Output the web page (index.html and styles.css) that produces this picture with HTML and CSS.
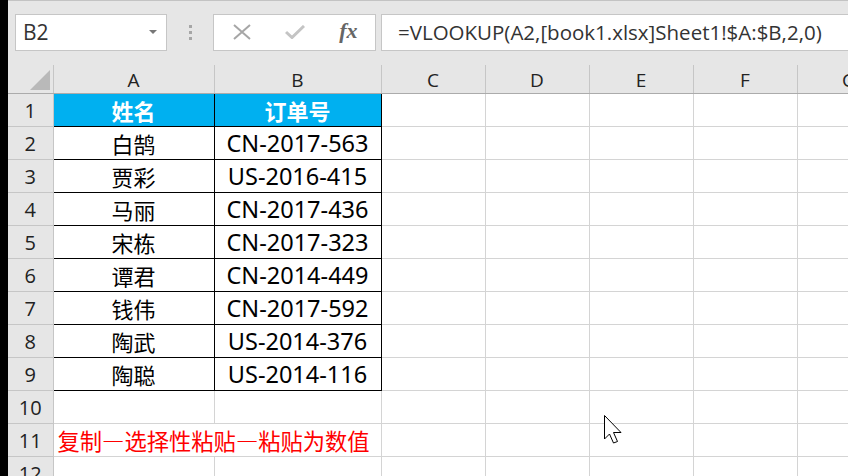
FILE: index.html
```html
<!DOCTYPE html>
<html lang="zh-CN">
<head>
    <meta charset="UTF-8">
    <meta name="viewport" content="width=device-width, initial-scale=1.0">
    <link rel="stylesheet" href="styles.css">
</head>
<body>
    <div class="strip"></div>
    <div class="app">
        <!-- barra de fórmulas -->
        <div class="toolbar">
            <div class="namebox">
                <span>B2</span>
                <span class="caret"></span>
            </div>
            <div class="grip"><i></i><i></i><i></i></div>
            <div class="buttons">
                <span class="btn">
                    <svg width="18" height="16" viewBox="0 0 18 16"><path d="M1 1 L17 15 M17 1 L1 15" stroke="#a6a6a6" stroke-width="2" fill="none"/></svg>
                </span>
                <span class="btn">
                    <svg width="20" height="14" viewBox="0 0 20 14"><path d="M1 7 L7 12.5 L19 1" stroke="#c4c4c4" stroke-width="3" fill="none"/></svg>
                </span>
                <span class="btn fx">fx</span>
            </div>
            <div class="formula">=VLOOKUP(A2,[book1.xlsx]Sheet1!$A:$B,2,0)</div>
        </div>

        <!-- planilha -->
        <table class="sheet">
            <colgroup>
                <col class="c-row">
                <col class="c-a">
                <col class="c-b">
                <col class="c-n">
                <col class="c-n">
                <col class="c-n">
                <col class="c-n">
                <col class="c-n">
            </colgroup>
            <tr class="colhead">
                <th class="corner"><span class="tri"></span></th>
                <th>A</th><th>B</th><th>C</th><th>D</th><th>E</th><th>F</th><th>G</th>
            </tr>
            <tr>
                <th>1</th>
                <td class="hd box">姓名</td><td class="hd box">订单号</td>
                <td></td><td></td><td></td><td></td><td></td>
            </tr>
            <tr>
                <th>2</th>
                <td class="box">白鹄</td><td class="box num">CN-2017-563</td>
                <td></td><td></td><td></td><td></td><td></td>
            </tr>
            <tr>
                <th>3</th>
                <td class="box">贾彩</td><td class="box num">US-2016-415</td>
                <td></td><td></td><td></td><td></td><td></td>
            </tr>
            <tr>
                <th>4</th>
                <td class="box">马丽</td><td class="box num">CN-2017-436</td>
                <td></td><td></td><td></td><td></td><td></td>
            </tr>
            <tr>
                <th>5</th>
                <td class="box">宋栋</td><td class="box num">CN-2017-323</td>
                <td></td><td></td><td></td><td></td><td></td>
            </tr>
            <tr>
                <th>6</th>
                <td class="box">谭君</td><td class="box num">CN-2014-449</td>
                <td></td><td></td><td></td><td></td><td></td>
            </tr>
            <tr>
                <th>7</th>
                <td class="box">钱伟</td><td class="box num">CN-2017-592</td>
                <td></td><td></td><td></td><td></td><td></td>
            </tr>
            <tr>
                <th>8</th>
                <td class="box">陶武</td><td class="box num">US-2014-376</td>
                <td></td><td></td><td></td><td></td><td></td>
            </tr>
            <tr>
                <th>9</th>
                <td class="box">陶聪</td><td class="box num">US-2014-116</td>
                <td></td><td></td><td></td><td></td><td></td>
            </tr>
            <tr>
                <th>10</th>
                <td></td><td></td>
                <td></td><td></td><td></td><td></td><td></td>
            </tr>
            <tr>
                <th>11</th>
                <td class="note" colspan="2">复制—选择性粘贴—粘贴为数值</td>
                <td></td><td></td><td></td><td></td><td></td>
            </tr>
            <tr>
                <th>12</th>
                <td></td><td></td>
                <td></td><td></td><td></td><td></td><td></td>
            </tr>
        </table>

        <!-- ponteiro do mouse -->
        <svg class="cursor" width="20" height="30" viewBox="0 0 20 30">
            <path d="M0.5 0.5 L0.5 24 L5.5 19 L9.5 28 L13.5 26.5 L9.5 17.5 L17 17.5 Z" fill="#fff" stroke="#000" stroke-width="1"/>
        </svg>
    </div>
</body>
</html>
```

FILE: styles.css
```css
/* layout geral */
html, body {
    margin: 0;
    height: 100%;
    overflow: hidden;
}

body {
    display: flex;
    background: #fff;
    font-family: "Noto Sans", "Noto Sans CJK SC", sans-serif;
}

.strip {
    width: 8px;
    flex: 0 0 8px;
    background: #000;
}

.app {
    position: relative;
    flex: 1;
    overflow: hidden;
}

/* barra de fórmulas */
.toolbar {
    display: flex;
    align-items: center;
    height: 65px;
    box-sizing: border-box;
    border-top: 1px solid #c3c3c3;
    padding: 0 0 2px 7px;
    background: #e6e6e6;
}

.namebox,
.buttons,
.formula {
    height: 37px;
    box-sizing: border-box;
    border: 1px solid #c6c6c6;
    background: #fff;
}

.namebox {
    width: 152px;
    display: flex;
    align-items: center;
    justify-content: space-between;
    padding: 0 9px 0 7px;
    font-family: "Open Sans", sans-serif;
    font-size: 21px;
    color: #333;
}

.caret {
    width: 0;
    height: 0;
    border-left: 4px solid transparent;
    border-right: 4px solid transparent;
    border-top: 4px solid #777;
}

.grip {
    width: 46px;
    display: flex;
    flex-direction: column;
    align-items: center;
    gap: 3px;
}

.grip i {
    width: 3px;
    height: 3px;
    background: #a6a6a6;
}

.buttons {
    width: 163px;
    display: flex;
    align-items: center;
    padding-left: 1px;
}

.btn {
    width: 54px;
    display: flex;
    justify-content: center;
    align-items: center;
}

.fx {
    font-family: "Liberation Serif", serif;
    font-style: italic;
    font-weight: bold;
    font-size: 22px;
    color: #666;
    padding-bottom: 3px;
}

.formula {
    flex: 1;
    margin-left: 5px;
    border-right: none;
    display: flex;
    align-items: center;
    padding-left: 16px;
    font-family: "Open Sans", sans-serif;
    font-size: 20.5px;
    color: #333;
    white-space: nowrap;
}

/* planilha */
.sheet {
    border-collapse: collapse;
    table-layout: fixed;
    width: 893px;
}

.c-row { width: 45px; }
.c-a { width: 161px; }
.c-b { width: 167px; }
.c-n { width: 104px; }

.sheet th,
.sheet td {
    padding: 0;
    border-right: 1px solid #d4d4d4;
    border-bottom: 1px solid #d4d4d4;
    height: 32px;
    text-align: center;
    white-space: nowrap;
    overflow: visible;
}

.sheet th {
    background: #e6e6e6;
    font-weight: normal;
    font-family: "Open Sans", sans-serif;
    font-size: 20px;
    color: #222;
    border-right-color: #c6c6c6;
    border-bottom-color: #c6c6c6;
}

.colhead th {
    height: 26px;
    font-size: 19px;
    border-bottom-color: #ababab;
    padding-top: 2px;
}

.corner {
    position: relative;
}

.tri {
    position: absolute;
    right: 3px;
    bottom: 3px;
    width: 0;
    height: 0;
    border-left: 20px solid transparent;
    border-bottom: 20px solid #b9b9b9;
}

.sheet td {
    font-size: 22px;
    color: #000;
}

.sheet td.num {
    font-size: 23.5px;
}

.sheet td.box {
    border-right-color: #000;
    border-bottom-color: #000;
}

.sheet td.hd {
    background: #00b0f0;
    color: #fff;
    font-weight: bold;
}

.sheet td.note {
    text-align: left;
    padding-left: 4px;
    color: #ff0000;
    font-size: 22.3px;
    font-family: "Noto Sans CJK SC", sans-serif;
}

.cursor {
    position: absolute;
    left: 596px;
    top: 415px;
}
```
